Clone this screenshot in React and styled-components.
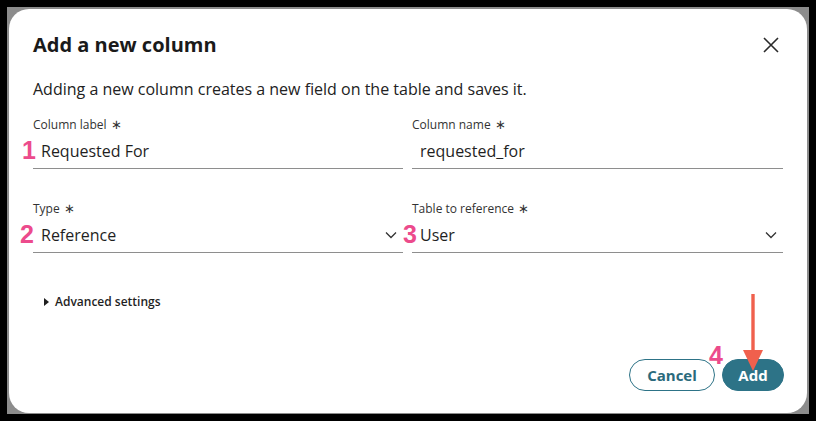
import React from "react";
import styled, { createGlobalStyle } from "styled-components";

const Global = createGlobalStyle`
  html, body { margin: 0; padding: 0; background: #000; }
  body { font-family: "Open Sans", "Noto Sans", Arial, sans-serif; }
  * { box-sizing: border-box; }
`;

const Frame = styled.div`
  width: 816px;
  height: 421px;
  background: #000;
  padding: 7px;
`;

const Backdrop = styled.div`
  height: 100%;
  background: #8c8c8c;
  padding: 2px 2px 1px 2px;
`;

const Dialog = styled.div`
  position: relative;
  height: 100%;
  background: #fff;
  border-radius: 20px;
  padding: 22px 23px 22px 24px;
  display: flex;
  flex-direction: column;
  color: #1f1f1f;
`;

const Header = styled.div`
  display: flex;
  align-items: center;
  justify-content: space-between;
`;

const Title = styled.h1`
  margin: 0;
  font-size: 20px;
  line-height: 28px;
  font-weight: 700;
  color: #1a1a1a;
`;

const CloseBtn = styled.button`
  border: 0;
  background: none;
  padding: 0;
  width: 18px;
  height: 18px;
  margin-right: 4px;
  display: flex;
  align-items: center;
  justify-content: center;
`;

const Description = styled.p`
  margin: 18px 0 0;
  font-size: 16px;
  line-height: 24px;
  color: #222;
`;

const Grid = styled.div`
  display: grid;
  grid-template-columns: 370px 371px;
  column-gap: 9px;
  margin-top: ${(p) => p.$mt}px;
`;

const Field = styled.div`
  position: relative;
  display: flex;
  flex-direction: column;
`;

const Label = styled.label`
  font-size: 12px;
  line-height: 16px;
  color: #333;
`;

const Star = styled.span`
  margin-left: 4px;
  font-size: 13px;
`;

const Input = styled.div`
  margin-top: 3px;
  height: 33px;
  border-bottom: 1px solid #8e8e8e;
  padding: 0 6px 2px 8px;
  display: flex;
  align-items: center;
  justify-content: space-between;
  font-size: 16px;
  color: #1f1f1f;
`;

const Num = styled.span`
  position: absolute;
  left: ${(p) => p.$left}px;
  top: ${(p) => p.$top}px;
  font-family: "Liberation Sans", Arial, sans-serif;
  font-weight: 700;
  font-size: 25px;
  line-height: 24px;
  color: #ec4b8c;
`;

const Advanced = styled.div`
  margin-top: 40px;
  margin-left: 11px;
  display: flex;
  align-items: center;
  gap: 6px;
  font-size: 12px;
  line-height: 18px;
  font-weight: 600;
  color: #1f1f1f;
`;

const Footer = styled.div`
  margin-top: auto;
  display: flex;
  justify-content: flex-end;
  gap: 7px;
`;

const Btn = styled.button`
  position: relative;
  height: 32px;
  width: ${(p) => p.$w}px;
  border-radius: 16px;
  font-family: "Open Sans", Arial, sans-serif;
  font-size: 15px;
  font-weight: 700;
  border: 1px solid #2d7387;
  background: ${(p) => (p.$primary ? "#2d7387" : "#fff")};
  color: ${(p) => (p.$primary ? "#fff" : "#2a6a7c")};
  padding: 0;
`;

const Arrow = styled.svg`
  position: absolute;
  left: 733px;
  top: 285px;
`;

const Chevron = () => (
  <svg width="12" height="8" viewBox="0 0 12 8">
    <path d="M1 1.5 L6 6.5 L11 1.5" fill="none" stroke="#333" strokeWidth="1.3" />
  </svg>
);

export default function App() {
  return (
    <>
      <Global />
      <Frame>
        <Backdrop>
          <Dialog>
            <Header>
              <Title>Add a new column</Title>
              <CloseBtn aria-label="Close">
                <svg width="16" height="16" viewBox="0 0 16 16">
                  <path d="M1 1 L15 15 M15 1 L1 15" stroke="#2a2a2a" strokeWidth="1.6" />
                </svg>
              </CloseBtn>
            </Header>
            <Description>
              Adding a new column creates a new field on the table and saves it.
            </Description>
            <Grid $mt={15}>
              <Field>
                <Label>
                  Column label<Star>∗</Star>
                </Label>
                <Input>Requested For</Input>
                <Num $left={-11} $top={22}>1</Num>
              </Field>
              <Field>
                <Label>
                  Column name<Star>∗</Star>
                </Label>
                <Input>requested_for</Input>
              </Field>
            </Grid>
            <Grid $mt={31}>
              <Field>
                <Label>
                  Type<Star>∗</Star>
                </Label>
                <Input>
                  Reference
                  <Chevron />
                </Input>
                <Num $left={-13} $top={22}>2</Num>
              </Field>
              <Field>
                <Label>
                  Table to reference<Star>∗</Star>
                </Label>
                <Input>
                  User
                  <Chevron />
                </Input>
                <Num $left={-9} $top={22}>3</Num>
              </Field>
            </Grid>
            <Advanced>
              <svg width="5" height="8" viewBox="0 0 5 8">
                <path d="M0 0 L5 4 L0 8 Z" fill="#1f1f1f" />
              </svg>
              Advanced settings
            </Advanced>
            <Footer>
              <Btn $w={86}>Cancel</Btn>
              <Btn $w={62} $primary>
                Add
                <Num $left={-14} $top={-17}>4</Num>
              </Btn>
            </Footer>
            <Arrow width="22" height="78" viewBox="0 0 22 78">
              <line x1="11" y1="0" x2="11" y2="60" stroke="#f0604d" strokeWidth="3.4" />
              <path d="M1 56 L21 56 L11 77 Z" fill="#f0604d" />
            </Arrow>
          </Dialog>
        </Backdrop>
      </Frame>
    </>
  );
}
